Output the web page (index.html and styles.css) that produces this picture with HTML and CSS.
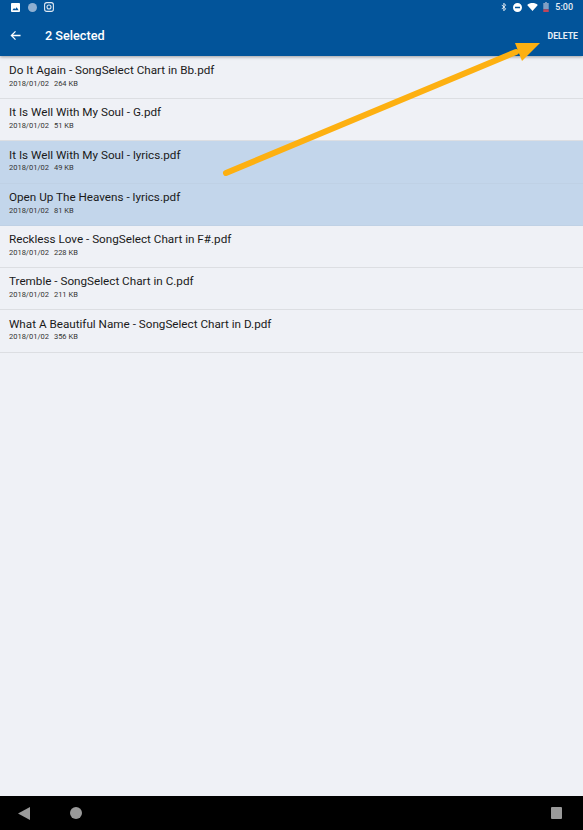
FILE: index.html
```html
<!DOCTYPE html>
<html lang="en">
<head>
  <meta charset="UTF-8">
  <meta name="viewport" content="width=device-width, initial-scale=1.0">
  <title>2 Selected</title>
  <link rel="stylesheet" href="styles.css">
</head>
<body>

  <div class="screen">
    <!-- Status bar + action bar -->
    <header class="top-bar">
      <div class="status-bar">
        <div class="status-group">
          <svg class="status-icon" viewBox="0 0 10 10"><path fill="#fff" fill-rule="evenodd" d="M1 0h8a1 1 0 0 1 1 1v8a1 1 0 0 1-1 1H1a1 1 0 0 1-1-1V1a1 1 0 0 1 1-1zM1.500 8h7L6.300 4.800 4.600 7 3.400 5.600z"/></svg>
          <span class="status-dot"></span>
          <svg class="status-icon insta" viewBox="0 0 10 10"><rect x=".6" y=".6" width="8.800" height="8.800" rx="2.200" fill="none" stroke="#dfe8f2" stroke-width="1.100"/><circle cx="5" cy="5" r="2" fill="none" stroke="#dfe8f2" stroke-width="1.100"/></svg>
        </div>
        <div class="status-group right">
          <svg class="status-icon bt" viewBox="0 0 8 12"><path fill="none" stroke="#fff" stroke-width="1.100" d="M1 3.200l5.200 5.300L3.800 11V1l2.400 2.500L1 8.800"/></svg>
          <svg class="status-icon dnd" viewBox="0 0 10 10"><path fill="#fff" fill-rule="evenodd" d="M5 0a5 5 0 1 1 0 10A5 5 0 0 1 5 0zM2.200 4.100v1.800h5.600V4.100z"/></svg>
          <svg class="status-icon wifi" viewBox="0 0 12 9"><path fill="#fff" d="M0 2.200C3.400-.7 8.600-.7 12 2.200L6 9z"/></svg>
          <svg class="status-icon battery" viewBox="0 0 6 11"><path fill="#7f9fc4" d="M2 0h2v1h2v7H0V1h2z"/><path fill="#c0455a" d="M0 8h6v3H0z"/></svg>
          <span class="clock">5:00</span>
        </div>
      </div>
      <div class="action-bar">
        <svg class="back-icon" viewBox="0 0 12 12"><path fill="none" stroke="#fff" stroke-width="1.400" d="M11.500 6H1.500M6 1.500L1.500 6 6 10.500"/></svg>
        <span class="action-title">2 Selected</span>
        <span class="action-delete">DELETE</span>
      </div>
    </header>

    <!-- File list -->
    <ul class="file-list">
      <li class="file-row">
        <div class="file-name">Do It Again - SongSelect Chart in Bb.pdf</div>
        <div class="file-meta"><span>2018/01/02</span><span>264 KB</span></div>
      </li>
      <li class="file-row">
        <div class="file-name">It Is Well With My Soul - G.pdf</div>
        <div class="file-meta"><span>2018/01/02</span><span>51 KB</span></div>
      </li>
      <li class="file-row selected">
        <div class="file-name">It Is Well With My Soul - lyrics.pdf</div>
        <div class="file-meta"><span>2018/01/02</span><span>49 KB</span></div>
      </li>
      <li class="file-row selected">
        <div class="file-name">Open Up The Heavens - lyrics.pdf</div>
        <div class="file-meta"><span>2018/01/02</span><span>81 KB</span></div>
      </li>
      <li class="file-row">
        <div class="file-name">Reckless Love - SongSelect Chart in F#.pdf</div>
        <div class="file-meta"><span>2018/01/02</span><span>228 KB</span></div>
      </li>
      <li class="file-row">
        <div class="file-name">Tremble - SongSelect Chart in C.pdf</div>
        <div class="file-meta"><span>2018/01/02</span><span>211 KB</span></div>
      </li>
      <li class="file-row">
        <div class="file-name">What A Beautiful Name - SongSelect Chart in D.pdf</div>
        <div class="file-meta"><span>2018/01/02</span><span>356 KB</span></div>
      </li>
    </ul>

    <!-- Nav bar -->
    <footer class="nav-bar">
      <svg class="nav-icon" viewBox="0 0 12 13"><path fill="#9a9a9a" d="M12 0v13L0 6.500z"/></svg>
      <span class="nav-home"></span>
      <span class="nav-recent"></span>
    </footer>

    <!-- Annotation arrow drawn over the screenshot -->
    <svg class="arrow" viewBox="0 0 583 830">
      <path d="M226 173L516 52" stroke="#fdb011" stroke-width="6" stroke-linecap="round" fill="none"/>
      <path d="M540 43L515 43 522 61z" fill="#fdb011"/>
    </svg>
  </div>

</body>
</html>
```

FILE: styles.css
```css
* {
  box-sizing: border-box;
}

body {
  margin: 0;
  font-family: Roboto, "Liberation Sans", sans-serif;
  background-color: #eff1f6;
}

.screen {
  position: relative;
  display: flex;
  flex-direction: column;
  width: 583px;
  height: 830px;
  overflow: hidden;
}

.top-bar {
  height: 56px;
  background: #02549a;
  color: #fff;
  box-shadow: 0 1px 3px rgba(0, 0, 0, 0.35);
  position: relative;
}

.status-bar {
  display: flex;
  justify-content: space-between;
  align-items: center;
  height: 14px;
  padding: 0 10px 0 11px;
}

.status-group {
  display: flex;
  align-items: center;
  gap: 7.500px;
}

.status-group.right {
  gap: 5px;
}

.status-icon {
  display: block;
  width: 9px;
  height: 9px;
}

.status-icon.insta {
  width: 10px;
  height: 10px;
}

.status-icon.bt {
  width: 6px;
  height: 10px;
  margin-right: 1px;
}

.status-icon.wifi {
  width: 11px;
  height: 8px;
}

.status-icon.battery {
  width: 6px;
  height: 10px;
  margin-right: 1px;
}

.status-dot {
  width: 9px;
  height: 9px;
  border-radius: 50%;
  background: #8fb0d2;
}

.clock {
  font-size: 9px;
  font-weight: 500;
  color: #e6edf5;
}

.action-bar {
  display: flex;
  align-items: center;
  height: 42px;
  padding: 1px 5px 0 10px;
}

.back-icon {
  width: 11px;
  height: 11px;
}

.action-title {
  margin-left: 24px;
  font-size: 12.700px;
  font-weight: 500;
}

.action-delete {
  margin-left: auto;
  margin-top: 1px;
  font-size: 8.700px;
  font-weight: 700;
  color: #e6edf5;
}

.file-list {
  flex: 1;
  list-style: none;
  margin: 0;
  padding: 0.700px 0 0;
}

.file-row {
  height: 42.300px;
  padding: 6.300px 9px 0;
  border-bottom: 1px solid #dcdee2;
}

.file-row.selected {
  background: #c3d6eb;
  border-bottom-color: #bfd1e5;
}

.file-name {
  font-size: 11.700px;
  line-height: 15px;
  color: #1a1a1a;
}

.file-meta {
  display: flex;
  gap: 5px;
  margin-top: 0.700px;
  font-size: 7.500px;
  line-height: 10px;
  color: #333;
}

.nav-bar {
  display: flex;
  align-items: center;
  height: 34px;
  padding: 0 21px 0 18px;
  background: #000;
}

.nav-icon {
  width: 12px;
  height: 13px;
}

.nav-home {
  width: 12px;
  height: 12px;
  margin-left: 40px;
  border-radius: 50%;
  background: #9a9a9a;
}

.nav-recent {
  width: 11px;
  height: 12px;
  margin-left: auto;
  border-radius: 1px;
  background: #9a9a9a;
}

.arrow {
  position: absolute;
  top: 0;
  left: 0;
  width: 583px;
  height: 830px;
  pointer-events: none;
}
```
